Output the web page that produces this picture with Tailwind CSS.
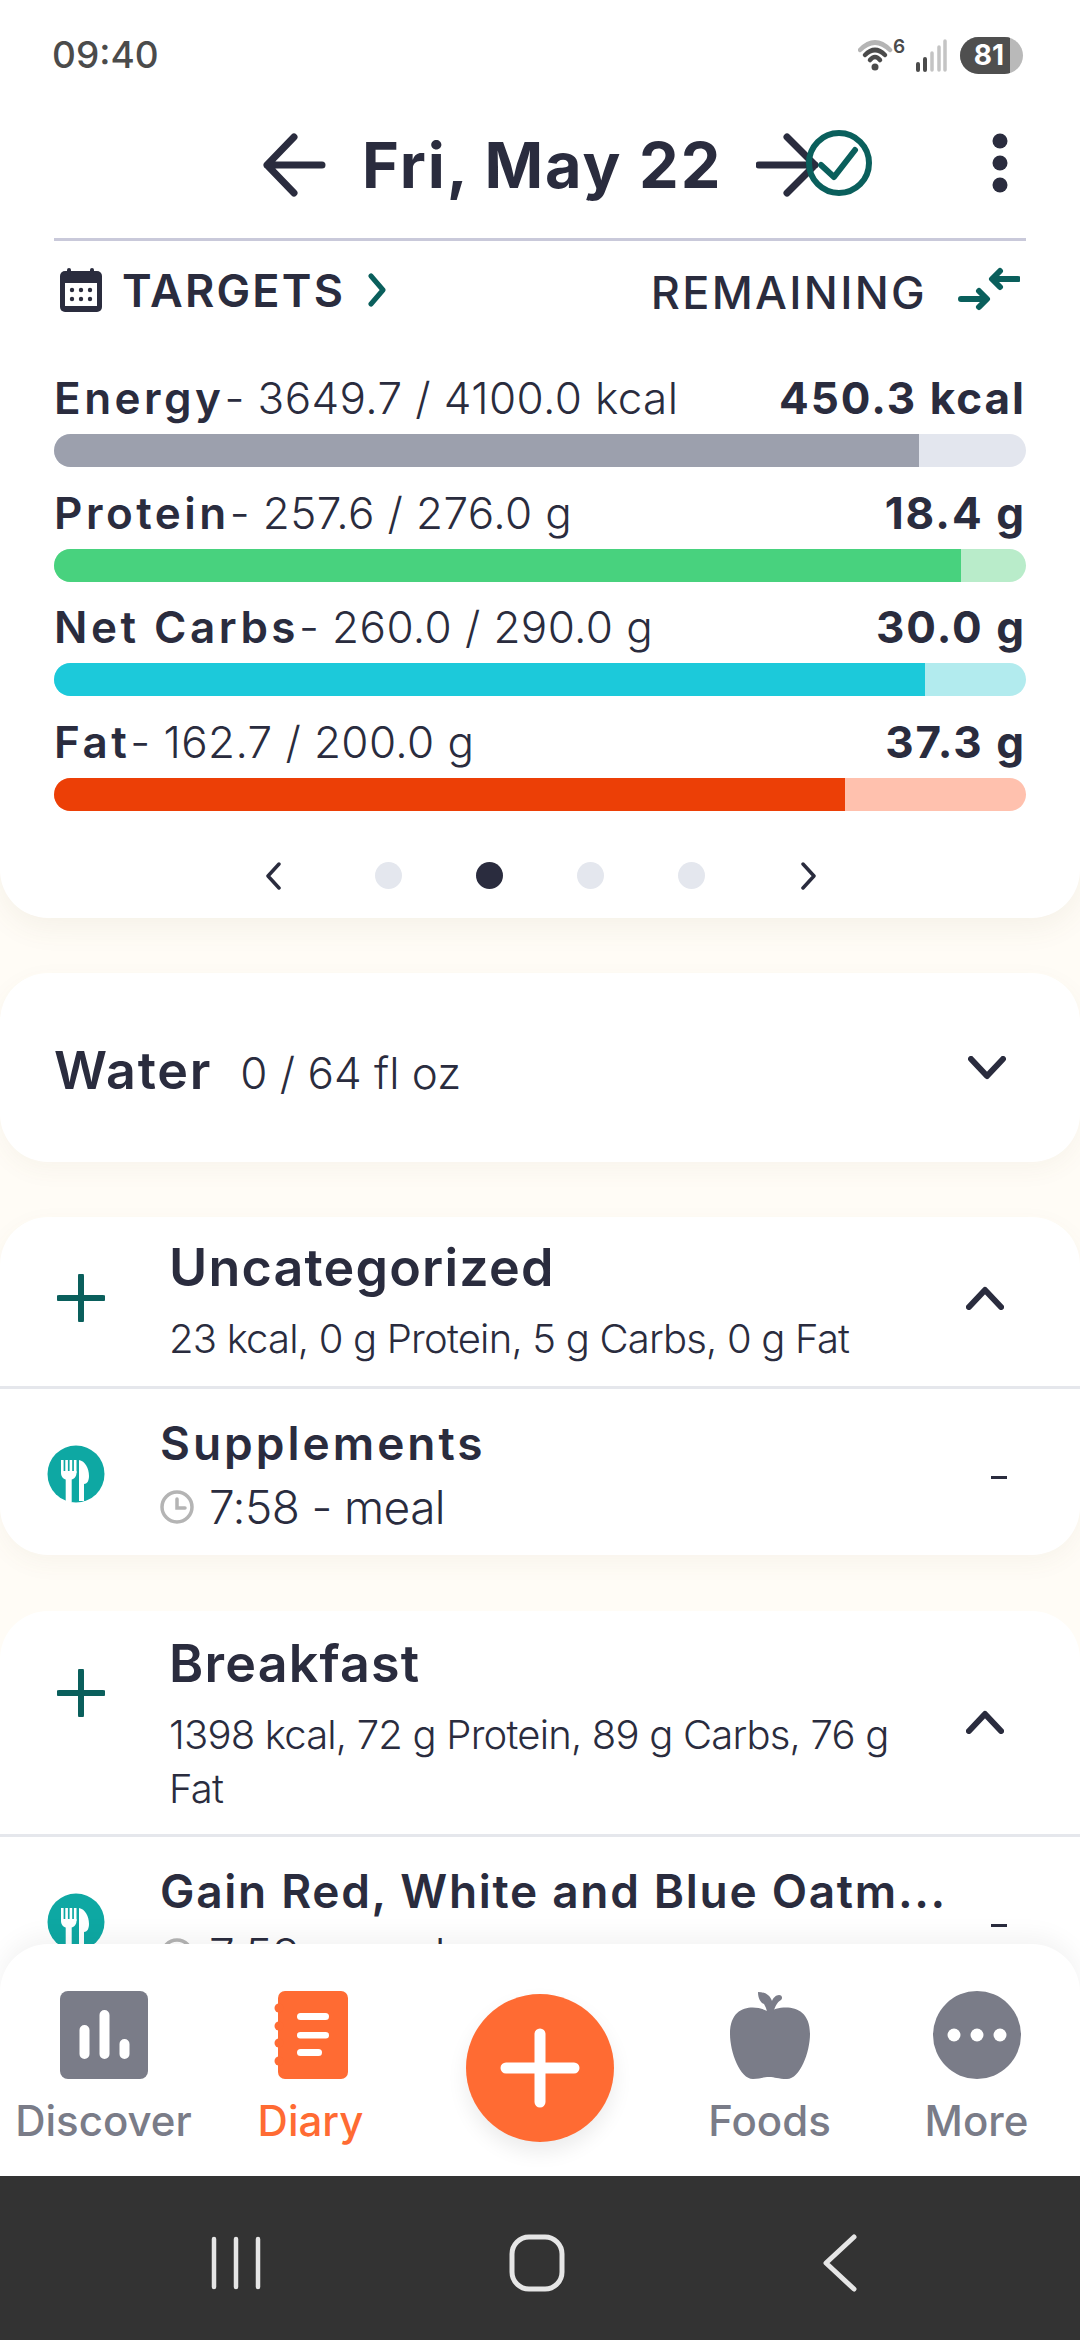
<!DOCTYPE html>
<html lang="en">
<head>
    <meta charset="UTF-8">
    <meta name="viewport" content="width=device-width, initial-scale=1.0">
    <title>Diary</title>
    <script src="https://cdn.jsdelivr.net/npm/@tailwindcss/browser@4"></script>
</head>
<body class="bg-[#fffcf6] font-['Inter',sans-serif] text-[#2a2c3e]">
<div class="relative w-[1080px] h-[2340px] overflow-hidden flex flex-col">

    <!-- Top card -->
    <div class="h-[918px] shrink-0 bg-white rounded-b-[48px] shadow-[0_10px_30px_rgba(120,100,60,0.07)] flex flex-col">
        <!-- Status bar -->
        <div class="h-[110px] shrink-0 flex items-center justify-between pl-[52px] pr-[57px]">
            <span class="text-[37px] font-medium text-[#4b4b4b]">09:40</span>
            <div class="flex items-center">
                <svg width="56" height="48" viewBox="0 -6 56 48" fill="none" stroke-linecap="round">
                    <path d="M2 13 Q17 -2 32 13" stroke="#b5b5b5" stroke-width="4.5"/>
                    <path d="M7 18 Q17 8 27 18" stroke="#4b4b4b" stroke-width="4.5"/>
                    <path d="M12 23 Q17 17 22 23" stroke="#4b4b4b" stroke-width="4.5"/>
                    <circle cx="17" cy="30" r="3.5" fill="#4b4b4b"/>
                    <text x="35" y="16" font-size="19" font-weight="600" fill="#4b4b4b" font-family="Inter">6</text>
                </svg>
                <svg class="ml-[1px]" width="32" height="36" viewBox="0 0 32 36" stroke-linecap="round">
                    <path d="M3 33V27M10 33V22" stroke="#4b4b4b" stroke-width="4"/>
                    <path d="M17 33V16M24 33V10M30 33V4" stroke="#c4c4c4" stroke-width="3.5"/>
                </svg>
                <div class="ml-[13px] w-[63px] h-[37px] rounded-full bg-[#b9b9b9] overflow-hidden">
                    <div class="w-[50px] h-full bg-[#4f4f4f] flex items-center justify-center pl-[8px] text-[28px] font-bold text-white">81</div>
                </div>
            </div>
        </div>

        <!-- Date header -->
        <div class="relative h-[110px] shrink-0 flex items-center pl-[262px]">
            <svg width="64" height="64" viewBox="0 0 64 64" fill="none" stroke="#2a2c3e" stroke-width="7" stroke-linecap="round" stroke-linejoin="round">
                <path d="M60 32H5M32 4 5 32l27 28"/>
            </svg>
            <span class="ml-[36px] text-[63px] font-bold tracking-[1.9px] leading-none">Fri, May 22</span>
            <svg class="absolute left-[756px] top-[23px]" width="62" height="64" viewBox="0 0 62 64" fill="none" stroke="#2a2c3e" stroke-width="7" stroke-linecap="round" stroke-linejoin="round">
                <path d="M3 32h56M31 4l28 28-28 28"/>
            </svg>
            <svg class="absolute left-[806px] top-[19px]" width="66" height="68" viewBox="0 0 66 68" fill="none">
                <circle cx="33" cy="34" r="30" stroke="#0a5f5c" stroke-width="6"/>
                <path d="M15 36l13 12 21-27" stroke="#0a5f5c" stroke-width="6" stroke-linecap="round" stroke-linejoin="round"/>
            </svg>
            <svg class="absolute left-[989px] top-[23px]" width="22" height="60" viewBox="0 0 22 60" fill="#2a2c3e">
                <circle cx="11" cy="8" r="7.5"/><circle cx="11" cy="30" r="7.5"/><circle cx="11" cy="52" r="7.5"/>
            </svg>
        </div>

        <!-- Divider -->
        <div class="mx-[54px] h-[3px] mt-[18px] shrink-0 bg-[#c9c9da]"></div>

        <!-- Targets row -->
        <div class="mx-[54px] mt-[24px] h-[50px] shrink-0 flex items-center justify-between">
            <div class="flex items-center">
                <svg class="ml-[6px]" width="42" height="44" viewBox="0 0 42 44" fill="#2a2c3e">
                    <rect x="0" y="3" width="42" height="41" rx="5"/>
                    <rect x="7" y="0" width="4" height="8" rx="2"/><rect x="30" y="0" width="4" height="8" rx="2"/>
                    <rect x="5" y="15" width="32" height="23" fill="white"/>
                    <g fill="#2a2c3e"><circle cx="12" cy="22" r="2.2"/><circle cx="21" cy="22" r="2.2"/><circle cx="30" cy="22" r="2.2"/><circle cx="12" cy="31" r="2.2"/><circle cx="21" cy="31" r="2.2"/><circle cx="30" cy="31" r="2.2"/></g>
                </svg>
                <span class="ml-[20px] text-[45px] font-semibold leading-none tracking-[2.2px]">TARGETS</span>
                <svg class="ml-[22px]" width="20" height="34" viewBox="0 0 20 34" fill="none" stroke="#0a5f5c" stroke-width="5" stroke-linecap="round" stroke-linejoin="round"><path d="M4 3l12 14L4 31"/></svg>
            </div>
            <div class="flex items-center mt-[4px]">
                <span class="text-[45px] font-medium leading-none tracking-[2.3px]">REMAINING</span>
                <svg class="ml-[31px] mr-[6px] -mt-[6px]" width="62" height="44" viewBox="0 0 62 44" fill="none" stroke="#0a5f5c" stroke-width="6" stroke-linecap="round" stroke-linejoin="round">
                    <path d="M60 12H38M42 4l-8 8 8 8M3 32h22M21 24l8 8-8 8"/>
                </svg>
            </div>
        </div>

        <!-- Nutrient bars -->
        <div class="mx-[54px] mt-[58px] flex flex-col gap-[20.5px]">
            <div>
                <div class="h-[50px] flex items-center justify-between text-[44px] leading-none">
                    <p><span class="font-semibold tracking-[3.5px]">Energy</span><span class="font-light tracking-[0.4px]">- 3649.7 / 4100.0 kcal</span></p>
                    <span class="font-bold tracking-[2px]">450.3 kcal</span>
                </div>
                <div class="mt-[11px] h-[33px] rounded-full bg-[#e3e6ee] overflow-hidden"><div class="w-[865px] h-full bg-[#9ca0ad]"></div></div>
            </div>
            <div>
                <div class="h-[50px] flex items-center justify-between text-[44px] leading-none">
                    <p><span class="font-semibold tracking-[3.5px]">Protein</span><span class="font-light tracking-[0.4px]">- 257.6 / 276.0 g</span></p>
                    <span class="font-bold tracking-[2px]">18.4 g</span>
                </div>
                <div class="mt-[11px] h-[33px] rounded-full bg-[#b9ecca] overflow-hidden"><div class="w-[907px] h-full bg-[#48d27e]"></div></div>
            </div>
            <div>
                <div class="h-[50px] flex items-center justify-between text-[44px] leading-none">
                    <p><span class="font-semibold tracking-[3.5px]">Net Carbs</span><span class="font-light tracking-[0.4px]">- 260.0 / 290.0 g</span></p>
                    <span class="font-bold tracking-[2px]">30.0 g</span>
                </div>
                <div class="mt-[11px] h-[33px] rounded-full bg-[#b2ebee] overflow-hidden"><div class="w-[871px] h-full bg-[#1cc9da]"></div></div>
            </div>
            <div>
                <div class="h-[50px] flex items-center justify-between text-[44px] leading-none">
                    <p><span class="font-semibold tracking-[3.5px]">Fat</span><span class="font-light tracking-[0.4px]">- 162.7 / 200.0 g</span></p>
                    <span class="font-bold tracking-[2px]">37.3 g</span>
                </div>
                <div class="mt-[11px] h-[33px] rounded-full bg-[#ffc1ae] overflow-hidden"><div class="w-[791px] h-full bg-[#ec3f06]"></div></div>
            </div>
        </div>

        <!-- Pager -->
        <div class="mt-[50px] h-[30px] flex items-center pl-[264px]">
            <svg width="18" height="28" viewBox="0 0 18 28" fill="none" stroke="#2a2c3e" stroke-width="3.5" stroke-linecap="round" stroke-linejoin="round"><path d="M15 2 4 14l11 12"/></svg>
            <span class="ml-[93px] w-[27px] h-[27px] rounded-full bg-[#e4e7ee]"></span>
            <span class="ml-[74px] w-[27px] h-[27px] rounded-full bg-[#2a2c3e]"></span>
            <span class="ml-[74px] w-[27px] h-[27px] rounded-full bg-[#e4e7ee]"></span>
            <span class="ml-[74px] w-[27px] h-[27px] rounded-full bg-[#e4e7ee]"></span>
            <svg class="ml-[95px]" width="18" height="28" viewBox="0 0 18 28" fill="none" stroke="#2a2c3e" stroke-width="3.5" stroke-linecap="round" stroke-linejoin="round"><path d="M3 2l11 12L3 26"/></svg>
        </div>
    </div>

    <!-- Water -->
    <div class="mt-[55px] h-[189px] shrink-0 bg-white rounded-[48px] shadow-[0_8px_24px_rgba(120,100,60,0.05)] flex items-center justify-between pl-[54px] pr-[74px]">
        <p class="flex items-baseline mt-[6px]"><span class="text-[52px] font-semibold tracking-[1.8px]">Water</span><span class="ml-[28px] text-[44px] font-light">0 / 64 fl oz</span></p>
        <svg width="38" height="24" viewBox="0 0 38 24" fill="none" stroke="#2a2c3e" stroke-width="6" stroke-linecap="round" stroke-linejoin="round"><path d="M3 3l16 17L35 3"/></svg>
    </div>

    <!-- Uncategorized -->
    <div class="mt-[55px] h-[338px] shrink-0 bg-white rounded-[48px] shadow-[0_8px_24px_rgba(120,100,60,0.05)] flex flex-col">
        <div class="relative h-[169px] shrink-0 pl-[169px] pt-[18px]">
            <svg class="absolute left-[57px] top-[57px]" width="48" height="48" viewBox="0 0 48 48" stroke="#0a5f5c" stroke-width="6" stroke-linecap="round"><path d="M24 2v44M2 24h44"/></svg>
            <p class="text-[52px] font-semibold leading-[66px] tracking-[1.2px]">Uncategorized</p>
            <p class="mt-[11px] text-[40px] font-light leading-[54px] tracking-[-0.8px]">23 kcal, 0 g Protein, 5 g Carbs, 0 g Fat</p>
            <svg class="absolute left-[966px] top-[69px]" width="38" height="24" viewBox="0 0 38 24" fill="none" stroke="#2a2c3e" stroke-width="6" stroke-linecap="round" stroke-linejoin="round"><path d="M3 21 19 4l16 17"/></svg>
        </div>
        <div class="h-[3px] shrink-0 bg-[#e5e7ec]"></div>
        <div class="relative pl-[160px] pt-[27px]">
            <svg class="absolute left-[47px] top-[56px]" width="58" height="58" viewBox="0 0 58 58"><use href="#meal-icon"/></svg>
            <p class="text-[46px] font-semibold leading-[54px] tracking-[3px]">Supplements</p>
            <div class="mt-[9px] flex items-center">
                <svg width="34" height="34" viewBox="0 0 34 34" fill="none" stroke="#b4b4b4" stroke-width="3.5"><circle cx="17" cy="17" r="15"/><path d="M17 9v9h8" stroke-linecap="round"/></svg>
                <span class="ml-[15px] text-[46px] font-light leading-[56px] tracking-[-0.6px]">7:58 - meal</span>
            </div>
            <span class="absolute left-[991px] top-[87px] w-[16px] h-[3px] bg-[#2a2c3e]"></span>
        </div>
    </div>

    <!-- Breakfast -->
    <div class="mt-[56px] flex-1 bg-white rounded-t-[48px] flex flex-col">
        <div class="relative h-[223px] shrink-0 pl-[169px] pt-[20px]">
            <svg class="absolute left-[57px] top-[58px]" width="48" height="48" viewBox="0 0 48 48" stroke="#0a5f5c" stroke-width="6" stroke-linecap="round"><path d="M24 2v44M2 24h44"/></svg>
            <p class="text-[52px] font-semibold leading-[66px] tracking-[1.2px]">Breakfast</p>
            <p class="mt-[11px] w-[740px] text-[40px] font-light leading-[54px] tracking-[-0.8px]">1398 kcal, 72 g Protein, 89 g Carbs, 76 g Fat</p>
            <svg class="absolute left-[966px] top-[99px]" width="38" height="24" viewBox="0 0 38 24" fill="none" stroke="#2a2c3e" stroke-width="6" stroke-linecap="round" stroke-linejoin="round"><path d="M3 21 19 4l16 17"/></svg>
        </div>
        <div class="h-[3px] shrink-0 bg-[#e5e7ec]"></div>
        <div class="relative pl-[160px] pt-[27px]">
            <svg class="absolute left-[47px] top-[56px]" width="58" height="58" viewBox="0 0 58 58"><use href="#meal-icon"/></svg>
            <p class="whitespace-nowrap text-[46px] font-semibold leading-[54px] tracking-[1.7px]">Gain Red, White and Blue Oatm...</p>
            <div class="mt-[9px] flex items-center">
                <svg width="34" height="34" viewBox="0 0 34 34" fill="none" stroke="#b4b4b4" stroke-width="3.5"><circle cx="17" cy="17" r="15"/><path d="M17 9v9h8" stroke-linecap="round"/></svg>
                <span class="ml-[15px] text-[46px] font-light leading-[56px] tracking-[-0.6px]">7:58 - meal</span>
            </div>
            <span class="absolute left-[991px] top-[87px] w-[16px] h-[3px] bg-[#2a2c3e]"></span>
        </div>
    </div>

    <!-- Bottom navigation, lies over the list -->
    <div class="absolute left-0 right-0 bottom-[164px] h-[232px] bg-white rounded-t-[48px] shadow-[0_-8px_24px_rgba(0,0,0,0.05)]">
        <div class="h-full grid grid-cols-[207px_207px_252px_207px_207px] pt-[47px]">
            <div class="flex flex-col items-center">
                <svg width="88" height="88" viewBox="0 0 88 88">
                    <rect width="88" height="88" rx="8" fill="#7a7c88"/>
                    <g stroke="white" stroke-width="10" stroke-linecap="round"><path d="M24.5 39V63M44.5 24V63M64.5 53V63"/></g>
                </svg>
                <span class="mt-[14px] text-[42px] font-medium text-[#7a7c88] leading-[56px]">Discover</span>
            </div>
            <div class="flex flex-col items-center">
                <svg width="76" height="88" viewBox="0 0 76 88">
                    <rect x="5" width="70" height="88" rx="7" fill="#ff6b33"/>
                    <g fill="#ff6b33"><circle cx="6" cy="17" r="4.5"/><circle cx="6" cy="35" r="4.5"/><circle cx="6" cy="52" r="4.5"/><circle cx="6" cy="70" r="4.5"/></g>
                    <g fill="white"><rect x="24" y="22" width="32" height="7" rx="3.5"/><rect x="24" y="41" width="32" height="6.5" rx="3.2"/><rect x="24" y="58" width="25" height="7" rx="3.5"/></g>
                </svg>
                <span class="mt-[14px] text-[42px] font-medium text-[#ff6b33] leading-[56px]">Diary</span>
            </div>
            <div class="flex justify-center">
                <div class="mt-[3px] w-[148px] h-[148px] rounded-full bg-[#ff6b33] shadow-[0_10px_20px_rgba(0,0,0,0.08)] flex items-center justify-center">
                    <svg width="80" height="80" viewBox="0 0 80 80" stroke="white" stroke-width="11" stroke-linecap="round"><path d="M40 6v68M6 40h68"/></svg>
                </div>
            </div>
            <div class="flex flex-col items-center">
                <svg width="80" height="88" viewBox="0 0 80 88" fill="#7a7c88">
                    <path d="M39 21C30 15 0 10 0 43c0 18 10 45 23 45 7 0 10-2 16-2s9 2 18 2c13 0 23-27 23-45C80 10 48 15 39 21z"/>
                    <path d="M28 1c7 0 12 3 14 9 1-3 4-6 7-6 3 0 4 3 2 5-4 2-6 7-8 13h-6c0-4-2-7-3-9-3-1-6-5-6-12z"/>
                </svg>
                <span class="mt-[14px] text-[42px] font-medium text-[#7a7c88] leading-[56px]">Foods</span>
            </div>
            <div class="flex flex-col items-center">
                <svg width="88" height="88" viewBox="0 0 88 88">
                    <circle cx="44" cy="44" r="44" fill="#7a7c88"/>
                    <g fill="white"><circle cx="21" cy="44" r="6.5"/><circle cx="44" cy="44" r="6.5"/><circle cx="67" cy="44" r="6.5"/></g>
                </svg>
                <span class="mt-[14px] text-[42px] font-medium text-[#7a7c88] leading-[56px]">More</span>
            </div>
        </div>
    </div>

    <!-- Android nav bar -->
    <div class="absolute left-0 right-0 bottom-0 h-[164px] bg-[#333333]">
        <svg class="absolute left-[210px] top-[60px]" width="52" height="54" viewBox="0 0 52 54" stroke="#e6e6e6" stroke-width="4.5" stroke-linecap="round"><path d="M4 3v48M26 3v48M48 3v48"/></svg>
        <svg class="absolute left-[509px] top-[58px]" width="56" height="58" viewBox="0 0 56 58" fill="none" stroke="#e6e6e6" stroke-width="5"><rect x="3" y="3" width="50" height="52" rx="17"/></svg>
        <svg class="absolute left-[822px] top-[58px]" width="36" height="58" viewBox="0 0 36 58" fill="none" stroke="#e6e6e6" stroke-width="5" stroke-linecap="round" stroke-linejoin="round"><path d="M32 3 4 29l28 26"/></svg>
    </div>

    <!-- Shared meal icon -->
    <svg class="hidden">
        <defs>
            <g id="meal-icon">
                <circle cx="29" cy="29" r="28.5" fill="#0ea8a3"/>
                <g fill="white">
                    <rect x="14" y="15" width="2.6" height="13"/><rect x="18.3" y="15" width="2.6" height="13"/><rect x="22.6" y="15" width="2.6" height="13"/><rect x="26.9" y="15" width="2.6" height="13"/>
                    <path d="M14 26h15.500v2c0 3.500-2.500 6-4.800 6.500V57h-6V34.500C16.500 34 14 31.500 14 28z"/>
                    <path d="M32 15c6 1 10 8 10 16 0 5-2 8-5 8v17h-5z"/>
                </g>
            </g>
        </defs>
    </svg>
</div>
</body>
</html>
